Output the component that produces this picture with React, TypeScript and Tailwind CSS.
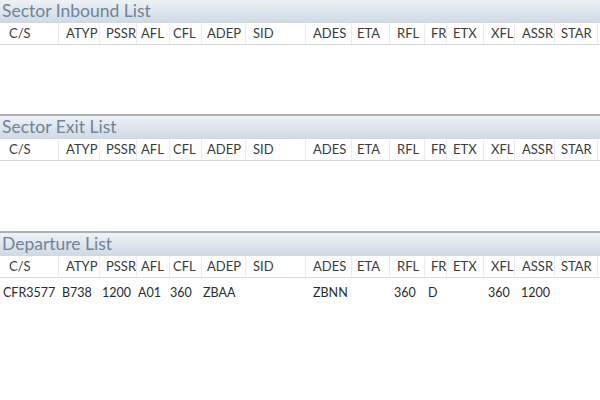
import React from 'react';

interface Column {
    key: string;
    width: number;
    headPad: number;
    dataPad: number;
}

const columns: Column[] = [
    { key: 'C/S', width: 59, headPad: 9, dataPad: 3 },
    { key: 'ATYP', width: 41, headPad: 7, dataPad: 3 },
    { key: 'PSSR', width: 37, headPad: 6, dataPad: 2 },
    { key: 'AFL', width: 33, headPad: 4, dataPad: 1 },
    { key: 'CFL', width: 32, headPad: 3, dataPad: 0 },
    { key: 'ADEP', width: 44, headPad: 5, dataPad: 1 },
    { key: 'SID', width: 60, headPad: 7, dataPad: 3 },
    { key: 'ADES', width: 46, headPad: 7, dataPad: 7 },
    { key: 'ETA', width: 38, headPad: 5, dataPad: 2 },
    { key: 'RFL', width: 35, headPad: 7, dataPad: 4 },
    { key: 'FR', width: 22, headPad: 6, dataPad: 3 },
    { key: 'ETX', width: 37, headPad: 6, dataPad: 3 },
    { key: 'XFL', width: 31, headPad: 7, dataPad: 4 },
    { key: 'ASSR', width: 40, headPad: 7, dataPad: 6 },
    { key: 'STAR', width: 43, headPad: 6, dataPad: 3 },
];

type Row = Record<string, string>;

const departures: Row[] = [
    {
        'C/S': 'CFR3577', ATYP: 'B738', PSSR: '1200', AFL: 'A01', CFL: '360', ADEP: 'ZBAA',
        ADES: 'ZBNN', RFL: '360', FR: 'D', XFL: '360', ASSR: '1200',
    },
];

const font = { fontFamily: 'Lato, "Noto Sans", sans-serif' };

const FlightList: React.FC<{ title: string; rows: Row[]; className: string }> = ({ title, rows, className }) => (
    <div className={`flex flex-col border-t-2 border-[#a9b0b8] first:border-t-0 ${className}`}>
        <div className="h-[22px] flex items-center pl-[2px] bg-gradient-to-b from-[#eef2f6] to-[#cfdae5] text-[#6f8498] text-[17.5px] leading-none">
            {title}
        </div>
        <div className="h-[23px] flex items-center bg-white border-y border-[#d4d8dc] text-[13px] text-[#3a3a3a]">
            {columns.map((c) => (
                <div key={c.key} className="h-full flex items-center border-r border-[#ececec] shrink-0" style={{ width: c.width, paddingLeft: c.headPad }}>
                    {c.key}
                </div>
            ))}
        </div>
        <div className="flex-1 bg-white pt-[6px]">
            {rows.map((r, i) => (
                <div key={i} className="h-[18px] flex items-center text-[12.5px] text-[#2a2a2a]">
                    {columns.map((c) => (
                        <div key={c.key} className="shrink-0 whitespace-nowrap" style={{ width: c.width, paddingLeft: c.dataPad }}>
                            {r[c.key] ?? ''}
                        </div>
                    ))}
                </div>
            ))}
        </div>
    </div>
);

export default function App() {
    return (
        <div className="w-[600px] h-[400px] flex flex-col bg-white overflow-hidden" style={font}>
            <FlightList title="Sector Inbound List" rows={[]} className="h-[114px]" />
            <FlightList title="Sector Exit List" rows={[]} className="h-[117px]" />
            <FlightList title="Departure List" rows={departures} className="flex-1" />
        </div>
    );
}
